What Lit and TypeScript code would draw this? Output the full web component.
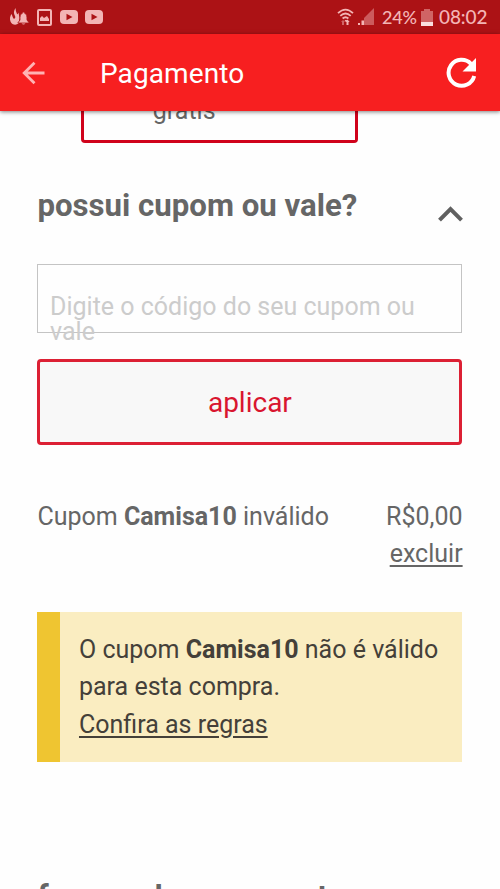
import { LitElement, html, css } from "lit";
import { customElement, property } from "lit/decorators.js";

@customElement("status-bar")
class StatusBar extends LitElement {
  static styles = css`
    :host { display: flex; height: 34px; flex: none; box-sizing: border-box; background: #ac1215; color: #f3b5b5; align-items: center; justify-content: space-between; padding: 0 12px 0 9px; font: 500 18px/34px Lato, sans-serif; }
    .group { display: flex; align-items: center; }
    svg { display: block; fill: currentColor; }
    .percent { width: 36px; margin-left: 7px; white-space: nowrap; letter-spacing: -.2px; }
    .battery { margin-left: 3px; }
    .clock { width: 49px; margin-left: 6px; white-space: nowrap; font-size: 19px; letter-spacing: -0.1px; }
    .play { margin-left: 8px; }
    .play + .play { margin-left: 7px; }
    .photo { margin-left: 7px; }
    .signal { margin-left: 3px; }
  `;
  render() {
    return html`
      <div class="group">
        <svg width="21" height="18" viewBox="0 0 21 18">
          <path d="M6.500 0C4.500 3 4.500 5.500 6 8 7 9.500 5.500 11.500 4.500 10.500 3.500 9.500 3.500 7.500 2.500 6 1 8 .5 11 1.500 13.500 3 17 7 17.500 9.500 15.500L10.500 10 9.500 4.500C9 6 8.500 6.500 8 6 7 4 6.500 2 6.500 0Z"/>
          <path stroke="#ac1215" stroke-width=".8" d="M8.800 15 11 12C11 8.500 11 6 13.300 5.200Q14.500 3 15.700 5.200C18 6 18 8.500 18 12L20.300 15Z"/><path d="M12.500 15.500h4q-2 2-4 0z"/>
        </svg>
        <svg class="photo" width="15" height="17" viewBox="0 0 15 17"><path fill-rule="evenodd" d="M2 0h11q2 0 2 2v13q0 2-2 2H2q-2 0-2-2V2q0-2 2-2zM2 2v13h11V2z"/><path d="M3 12V9l2-2 2 2 3-2 2 3v2z"/></svg>
        ${[0, 1].map(() => html`<svg class="play" width="18" height="14" viewBox="0 0 18 14"><rect width="18" height="14" rx="4"/><path fill="#ac1215" d="M6.500 3.700l6 3.300-6 3.300z"/></svg>`)}
      </div>
      <div class="group">
        <svg width="17" height="18" viewBox="0 0 17 18">
          <g fill="none" stroke="currentColor" stroke-width="1.800"><path d="M1 5.200Q8.500-2 16 5.200M3.300 7.900Q8.500 3 13.700 7.900M5.600 10.500Q8.500 8 11.400 10.500"/></g>
          <path d="M7.500 12h3l-1.500 2z"/><path opacity=".5" d="M4 14l2-2 2 2H7v3H5v-3z"/><path d="M9.500 17v-3H8.300l2.200-2.500 2.200 2.500h-1.200v3z"/>
        </svg>
        <svg class="signal" width="18" height="18" viewBox="0 0 18 18"><path opacity=".45" d="M17 0v17H7V10z"/><path d="M1 15h2v2H1zM4.500 12.500H7V17H4.500z"/></svg>
        <span class="percent">24%</span>
        <svg class="battery" width="12" height="17" viewBox="0 0 12 17"><path opacity=".5" d="M3 0h6v2h3v11H0V2h3z"/><path fill="#fbdede" d="M0 13h12v4H0z"/></svg>
        <span class="clock">08:02</span>
      </div>`;
  }
}

@customElement("app-header")
class AppHeader extends LitElement {
  @property() heading = "";
  static styles = css`
    :host { display: flex; height: 77px; flex: none; box-sizing: border-box; align-items: center; padding: 0 22px; background: #f71f20; color: #fff; box-shadow: 0 1px 4px rgba(0,0,0,.5); z-index: 1; font: 400 28px/40px Roboto, sans-serif; }
    svg { display: block; flex: none; }
    .title { margin: 2px 0 0 55px; flex: 1; font-size: 28px; letter-spacing: .1px; }
  `;
  render() {
    return html`
      <svg width="23" height="24" viewBox="0 0 23 24" fill="none" stroke="#ffb3b3" stroke-width="2.800"><path d="M12.500 1.700 2.200 12l10.300 10.300M2.200 12H22.500"/></svg>
      <span class="title">${this.heading}</span>
      <svg width="32" height="32" viewBox="0 0 32 32"><path d="M28.200 19A13 13 0 1 1 25 6.800" fill="none" stroke="#fff" stroke-width="4"/><path fill="#fff" d="M30 1v13.500H16.500z"/></svg>`;
  }
}

@customElement("app-root")
class AppRoot extends LitElement {
  static styles = css`
    :host { display: flex; flex-direction: column; height: 889px; overflow: hidden; background: #fefefe; color: #666; font: 400 25px/37.500px Roboto, sans-serif; }
    main { flex: 1; min-height: 0; overflow: hidden; padding: 0 37.400px; display: flex; flex-direction: column; }
    main > * { flex: none; }
    .shipping { width: 277px; height: 32.400px; box-sizing: border-box; margin-left: 43.400px; padding-left: 69px; border: 3px solid #d0021b; border-top: 0; border-radius: 0 0 4px 4px; line-height: 0; }
    .shipping span { display: block; margin-top: -19px; line-height: 38px; }
    h2 { margin: 0; font-size: 31.200px; line-height: 40px; font-weight: 700; white-space: nowrap; }
    .toggle { display: flex; justify-content: space-between; height: 58px; margin-top: 43px; }
    .toggle svg { margin-top: 19px; }
    .field { box-sizing: border-box; height: 69px; margin: 19.600px 0 0; width: 425px; border: 1px solid #c4c4c4; padding: 29px 12px 0 11.700px; line-height: 25px; color: #ccc; }
    button { display: block; width: 425px; height: 86px; margin: 26px 0 0; padding: 1px 0 0; border: 3px solid #dc2034; border-radius: 4px; background: #f8f8f8; color: #d9152f; font: 400 28px/80px Roboto, sans-serif; }
    .result { display: flex; justify-content: space-between; margin-top: 53px; }
    .amount { text-align: right; }
    .link { text-decoration: underline; text-decoration-thickness: 2px; text-underline-offset: 3px; }
    .alert { box-sizing: border-box; width: 425px; height: 150px; margin-top: 39px; border-left: 23px solid #efc531; padding: 18.600px 0 0 18.600px; background: #faedc1; color: #444039; }
    .next { margin-top: 115px; }
  `;
  render() {
    return html`
      <status-bar></status-bar>
      <app-header heading="Pagamento"></app-header>
      <main>
        <div class="shipping"><span>grátis</span></div>
        <div class="toggle"><h2>possui cupom ou vale?</h2>
          <svg width="25" height="17" viewBox="0 0 25 17" fill="none" stroke="#606060" stroke-width="4"><path d="M1.500 15.200 12.500 4l11 11.200"/></svg>
        </div>
        <div class="field">Digite o código do seu cupom ou vale</div>
        <button>aplicar</button>
        <div class="result"><div>Cupom <b>Camisa10</b> inválido</div><div class="amount">R$0,00<br><span class="link">excluir</span></div></div>
        <div class="alert">O cupom <b>Camisa10</b> não é válido<br>para esta compra.<br><span class="link">Confira as regras</span></div>
        <h2 class="next">formas de pagamento</h2>
      </main>`;
  }
}
